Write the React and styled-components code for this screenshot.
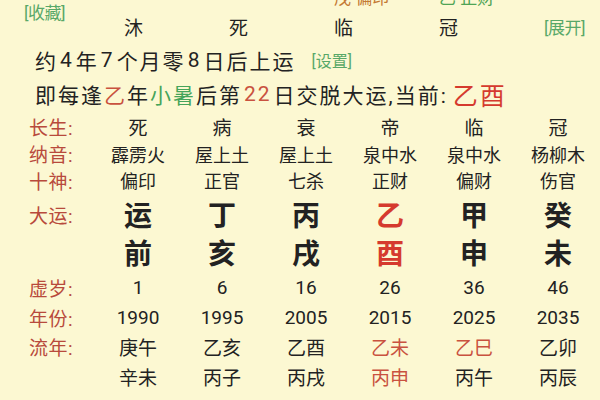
import React from 'react';
import styled, { createGlobalStyle } from 'styled-components';

const GlobalStyle = createGlobalStyle`
  html, body {
    margin: 0;
    padding: 0;
    background: #fcf8d2;
  }
  body {
    font-family: Roboto, "Noto Sans CJK SC", sans-serif;
    color: #222;
    width: 600px;
    height: 400px;
    overflow: hidden;
  }
`;

const Page = styled.div`
  width: 600px;
  height: 400px;
  overflow: hidden;
  background: #fcf8d2;
`;

const Header = styled.div`
  display: grid;
  grid-template-columns: 124px repeat(4, 105px) 1fr;
  grid-template-rows: 24px 36px;
  margin-top: -16px;
`;

const LinkText = styled.span`
  color: #58a868;
  font-size: ${p => p.size || 17}px;
  letter-spacing: -0.5px;
`;

const CollectCell = styled.div`
  grid-column: 1;
  grid-row: 1 / span 2;
  padding: 15px 0 0 24px;
`;

const ExpandCell = styled.div`
  grid-column: 6;
  grid-row: 2;
  display: flex;
  align-items: center;
`;

const TopCell = styled.div`
  display: flex;
  align-items: center;
  font-size: ${p => p.size || 17}px;
  color: ${p => p.color || '#222'};
  white-space: nowrap;
`;

const Line = styled.div`
  display: flex;
  align-items: center;
  height: ${p => p.h}px;
  padding-left: 35px;
  font-size: 21px;
  white-space: nowrap;
  letter-spacing: 2px;
`;

const Hi = styled.span`
  color: ${p => p.color};
  font-size: ${p => p.size || 21}px;
  margin: 0 ${p => p.gap || 0}px;
  letter-spacing: ${p => (p.tight ? 0 : 2)}px;
`;

const Num = styled.span`
  margin: 0 2px;
`;

const Row = styled.div`
  display: grid;
  grid-template-columns: 96px repeat(6, 84px);
  height: ${p => p.h}px;
  align-items: center;
`;

const Label = styled.div`
  padding-left: 29px;
  color: #b84a3c;
  font-size: 19px;
  letter-spacing: 0.5px;
`;

const Cell = styled.div`
  text-align: center;
  font-size: ${p => p.size || 19}px;
  font-weight: ${p => (p.bold ? 700 : 400)};
  color: ${p => p.color || '#222'};
  white-space: nowrap;
`;

const RED = '#d53a2e';
const SOFTRED = '#c9523f';

const rows = [
  { label: '长生:', h: 28, size: 19, cells: ['死', '病', '衰', '帝', '临', '冠'] },
  { label: '纳音:', h: 26, size: 18, cells: ['霹雳火', '屋上土', '屋上土', '泉中水', '泉中水', '杨柳木'] },
  { label: '十神:', h: 28, size: 18, cells: ['偏印', '正官', '七杀', '正财', '偏财', '伤官'] },
  { label: '大运:', h: 38, size: 28, bold: true, cells: ['运', '丁', '丙', '乙', '甲', '癸'], red: [3] },
  { label: '', h: 40, size: 28, bold: true, cells: ['前', '亥', '戌', '酉', '申', '未'], red: [3] },
  { label: '虚岁:', h: 30, size: 19, cells: ['1', '6', '16', '26', '36', '46'] },
  { label: '年份:', h: 30, size: 19, cells: ['1990', '1995', '2005', '2015', '2025', '2035'] },
  { label: '流年:', h: 29, size: 19, cells: ['庚午', '乙亥', '乙酉', '乙未', '乙巳', '乙卯'], red: [3, 4], soft: true },
  { label: '', h: 30, size: 19, cells: ['辛未', '丙子', '丙戌', '丙申', '丙午', '丙辰'], red: [3], soft: true },
];

export default function App() {
  return (
    <Page>
      <GlobalStyle />
      <Header>
        <CollectCell>
          <LinkText>[收藏]</LinkText>
        </CollectCell>
        <TopCell style={{ gridColumn: 4, gridRow: 1 }} color="#c47a34">戊 偏印</TopCell>
        <TopCell style={{ gridColumn: 5, gridRow: 1 }} color="#4fa455">乙 正财</TopCell>
        {['沐', '死', '临', '冠'].map((c, i) => (
          <TopCell key={c} style={{ gridColumn: i + 2, gridRow: 2 }} size={19}>
            {c}
          </TopCell>
        ))}
        <ExpandCell>
          <LinkText>[展开]</LinkText>
        </ExpandCell>
      </Header>
      <Line h={32}>
        约<Num>4</Num>年<Num>7</Num>个月零<Num>8</Num>日后上运
        <Hi color="#58a868" size={16} gap={16} tight>[设置]</Hi>
      </Line>
      <Line h={36}>
        即每逢<Hi color={SOFTRED}>乙</Hi>年<Hi color="#45a45a">小暑</Hi>后第
        <Hi color={SOFTRED} gap={2}>22</Hi>日交脱大运,当前:
        <Hi color={RED} size={25} gap={5}>乙酉</Hi>
      </Line>
      {rows.map((r, ri) => (
        <Row key={ri} h={r.h}>
          <Label>{r.label}</Label>
          {r.cells.map((c, ci) => (
            <Cell
              key={ci}
              size={r.size}
              bold={r.bold}
              color={r.red && r.red.includes(ci) ? (r.soft ? SOFTRED : RED) : undefined}
            >
              {c}
            </Cell>
          ))}
        </Row>
      ))}
    </Page>
  );
}
